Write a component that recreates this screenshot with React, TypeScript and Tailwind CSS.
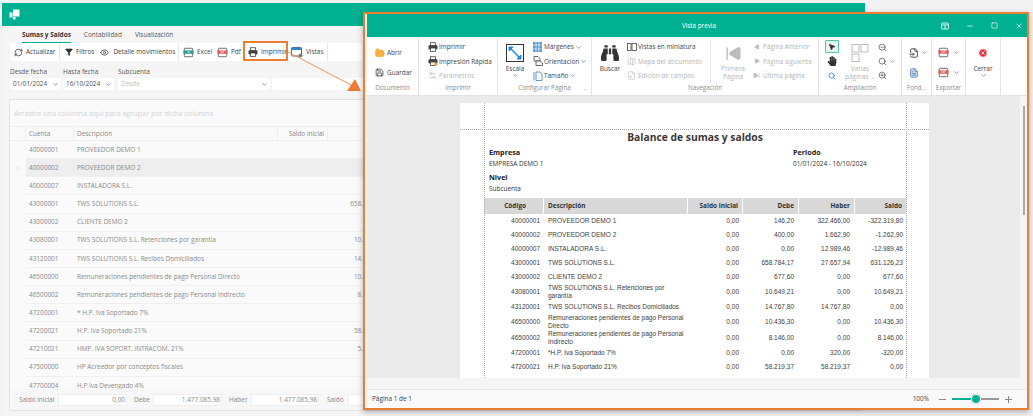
import React from "react";
import { ChevronDown, Eye, Filter, RefreshCw, FolderOpen, Save, MousePointer2, ZoomIn, ZoomOut, Search, SkipBack, Play, X, Minus, Square, XCircle, FileText, FileInput, Map, Settings2 } from "lucide-react";
import { FaBinoculars, FaHandPaper } from "react-icons/fa";

const Chev = ({ c = "#555" }: { c?: string }) => <ChevronDown size={7} color={c} strokeWidth={2} className="shrink-0" />;

const PrinterIcon = ({ size = 10, accent }: { size?: number; accent?: boolean }) => (
  <svg width={size} height={size} viewBox="0 0 10 10" className="shrink-0">
    <rect x="2.5" y="0.7" width="5" height="3" fill="#fff" stroke="#444" strokeWidth="0.8" />
    <rect x="0.5" y="3.2" width="9" height="4.2" rx="0.8" fill="#444" />
    <rect x="2.5" y="6" width="5" height="3.4" fill="#fff" stroke="#444" strokeWidth="0.8" />
    {accent && <circle cx="8" cy="8" r="1.6" fill="#f59a23" />}
  </svg>
);

const Sheet = ({ color, label }: { color: string; label: string }) => (
  <svg width="11" height="11" viewBox="0 0 13 12" className="shrink-0">
    <rect x="1.5" y="1" width="10" height="10" rx="1" fill="#fff" stroke="#555" strokeWidth="1" />
    <rect x="0.5" y="3.5" width="12" height="4" fill={color} />
    <text x="6.5" y="6.8" fontSize="3" fill="#fff" textAnchor="middle">{label}</text>
  </svg>
);

const ViewsIcon = () => (
  <svg width="12" height="11" viewBox="0 0 12 11" className="shrink-0">
    <rect x="0.5" y="0.5" width="10" height="8.5" rx="1" fill="#fff" stroke="#667" />
    <rect x="0.5" y="0.5" width="10" height="2.5" fill="#2f80d0" />
    <circle cx="9.5" cy="8.5" r="2" fill="#777" />
  </svg>
);

const ToolBtn = ({ icon, label, w, sep = true }: { icon: React.ReactNode; label: string; w: string; sep?: boolean }) => (
  <div className={`flex h-full items-center gap-[3px] pl-[2px] ${w} ${sep ? "border-r border-[#e6e6e6]" : ""}`}>
    {icon}
    <span className="whitespace-nowrap">{label}</span>
  </div>
);

const rows: [string, string, string][] = [
  ["40000001", "PROVEEDOR DEMO 1", "146,20"],
  ["40000002", "PROVEEDOR DEMO 2", "400,00"],
  ["40000007", "INSTALADORA S.L.", "0,00"],
  ["43000001", "TWS SOLUTIONS S.L.", "658.784,17"],
  ["43000002", "CLIENTE DEMO 2", "677,60"],
  ["43080001", "TWS SOLUTIONS S.L. Retenciones por garantía", "10.649,21"],
  ["43120001", "TWS SOLUTIONS S.L. Recibos Domiciliados", "14.767,80"],
  ["46500000", "Remuneraciones pendientes de pago Personal Directo", "10.436,30"],
  ["46500002", "Remuneraciones pendientes de pago Personal Indirecto", "8.146,00"],
  ["47200001", "* H.P. Iva Soportado 7%", "0,00"],
  ["47200021", "H.P. Iva Soportado 21%", "58.219,37"],
  ["47210021", "HMP. IVA SOPORT. INTRACOM. 21%", "5.400,00"],
  ["47500000", "HP Acreedor por conceptos fiscales", "0,00"],
  ["47700004", "H.P Iva Devengado 4%", "0,00"],
];

const report: [string, string, string, string, string, string, number][] = [
  ["40000001", "PROVEEDOR DEMO 1", "0,00", "146,20", "322.466,00", "-322.319,80", 14],
  ["40000002", "PROVEEDOR DEMO 2", "0,00", "400,00", "1.662,90", "-1.262,90", 14],
  ["40000007", "INSTALADORA S.L.", "0,00", "0,00", "12.989,46", "-12.989,46", 14],
  ["43000001", "TWS SOLUTIONS S.L.", "0,00", "658.784,17", "27.657,94", "631.126,23", 14],
  ["43000002", "CLIENTE DEMO 2", "0,00", "677,60", "0,00", "677,60", 14],
  ["43080001", "TWS SOLUTIONS S.L. Retenciones por garantía", "0,00", "10.649,21", "0,00", "10.649,21", 16],
  ["43120001", "TWS SOLUTIONS S.L. Recibos Domiciliados", "0,00", "14.767,80", "14.767,80", "0,00", 14],
  ["46500000", "Remuneraciones pendientes de pago Personal Directo", "0,00", "10.436,30", "0,00", "10.436,30", 16],
  ["46500002", "Remuneraciones pendientes de pago Personal Indirecto", "0,00", "8.146,00", "0,00", "8.146,00", 16],
  ["47200001", "*H.P. Iva Soportado 7%", "0,00", "0,00", "320,00", "-320,00", 14],
  ["47200021", "H.P. Iva Soportado 21%", "0,00", "58.219,37", "58.219,37", "0,00", 14],
];

const RibbonRow = ({ icon, label, off, chev }: { icon: React.ReactNode; label: string; off?: boolean; chev?: boolean }) => (
  <div className={`flex h-[15px] items-center gap-[1px] whitespace-nowrap ${off ? "text-[#b5b5b5]" : "text-[#444]"}`}>
    <span className="flex w-[11px] shrink-0 justify-center">{icon}</span>
    <span>{label}</span>
    {chev && <Chev />}
  </div>
);

const Group = ({ w, label, children, extra }: { w: string; label: string; children: React.ReactNode; extra?: React.ReactNode }) => (
  <div className={`relative flex h-full shrink-0 flex-col border-r border-[#e4e4e4] ${w}`}>
    <div className="flex min-h-0 flex-1 pt-[3px]">{children}</div>
    <div className="h-[12px] text-center text-[6.3px] leading-[10px] text-[#8c8c8c]">{label}</div>
    {extra}
  </div>
);

const Big = ({ icon, lines, off, chev, w }: { icon: React.ReactNode; lines: string[]; off?: boolean; chev?: boolean; w: string }) => (
  <div className={`flex shrink-0 flex-col items-center ${w} ${off ? "text-[#b5b5b5]" : "text-[#444]"}`}>
    <div className="flex h-[24px] items-center pt-[2px]">{icon}</div>
    {lines.map((l) => (
      <div key={l} className="mt-[-1px] h-[9px] pt-[1px] leading-[9px]">{l}</div>
    ))}
    {chev && <Chev />}
  </div>
);

export default function App() {
  return (
    <div className="relative h-[416px] w-[1033px] overflow-hidden bg-[#f3f3f3] pt-[3px] pl-[2px] font-['Open_Sans',sans-serif] text-[6.45px] text-[#444]">
      {/* Back window */}
      <div className="flex h-[413px] w-[863px] flex-col bg-[#f5f5f5]">
        <div className="flex h-[23px] shrink-0 items-center bg-[#00b191] pl-[7px]">
          <svg width="11" height="11" viewBox="0 0 11 11">
            <rect x="4" y="0.5" width="6.5" height="7" fill="#fff" />
            <rect x="0.5" y="3.5" width="3" height="5" fill="#fff" />
            <rect x="4" y="8" width="2.5" height="2.5" fill="#fff" />
          </svg>
        </div>
        <div className="flex h-[17px] shrink-0 items-center gap-[13px] pl-[20px] text-[#555]">
          <span className="relative font-bold text-[#333]">
            Sumas y Saldos
            <span className="absolute right-0 bottom-[-4px] left-0 h-[1px] bg-[#00b191]" />
          </span>
          <span className="font-medium">Contabilidad</span>
          <span className="font-medium">Visualización</span>
        </div>
        <div className="ml-[8px] flex h-[18px] w-[352px] shrink-0 items-center rounded-[3px] bg-white text-[#444]">
          <ToolBtn w="w-[50px] pl-[4px]" label="Actualizar" icon={<RefreshCw size={9} color="#333" />} />
          <div className="flex h-full w-[119px] items-center border-r border-[#e6e6e6] pl-[5px]">
            <Filter size={8} color="#333" fill="#333" />
            <span className="ml-[3px]">Filtros</span>
            <Eye size={9} color="#333" className="ml-[6px]" />
            <span className="ml-[4px] whitespace-nowrap">Detalle movimientos</span>
          </div>
          <ToolBtn w="w-[33px] pl-[4px]" sep={false} label="Excel" icon={<Sheet color="#2a9d8f" label="xls" />} />
          <ToolBtn w="w-[31px] pl-[5px]" sep={false} label="Pdf" icon={<Sheet color="#e05a5a" label="pdf" />} />
          <ToolBtn w="w-[45px] pl-[5px]" label="Imprimir" icon={<PrinterIcon />} />
          <ToolBtn w="w-[40px] pl-[3px]" label="Vistas" icon={<ViewsIcon />} />
        </div>
        <div className="flex shrink-0 gap-[2px] pt-[5px] pl-[8px] text-[#555]">
          <div className="w-[51px]">
            <div className="h-[11px] leading-[11px]">Desde fecha</div>
            <div className="mt-[1px] flex h-[12px] items-center justify-between rounded-[2px] bg-white pr-[2px] pl-[3px]">01/01/2024<Chev /></div>
          </div>
          <div className="w-[51px]">
            <div className="h-[11px] leading-[11px]">Hasta fecha</div>
            <div className="mt-[1px] flex h-[12px] items-center justify-between rounded-[2px] bg-white pr-[2px] pl-[3px]">16/10/2024<Chev /></div>
          </div>
          <div className="ml-[2px] w-[152px]">
            <div className="h-[11px] leading-[11px]">Subcuenta</div>
            <div className="mt-[1px] flex h-[12px] items-center justify-between rounded-[2px] bg-white pr-[2px] pl-[3px] text-[#c0c0c0]">Desde<Chev /></div>
          </div>
          <div className="w-[120px] pt-[12px]">
            <div className="h-[12px] rounded-[2px] bg-white" />
          </div>
        </div>
        <div className="mt-[9px] ml-[7px] flex h-[312px] w-[854px] flex-col overflow-hidden rounded-[2px] border border-[#e2e2e2] bg-[#fafafa]">
          <div className="flex h-[26px] shrink-0 items-center pl-[4px] text-[7.2px] text-[#d4d4d4]">Arrastre una columna aquí para agrupar por dicha columna</div>
          <div className="flex h-[15px] shrink-0 items-center border-y border-[#efefef] text-[#888]">
            <div className="h-full w-[16px] border-r border-[#efefef]" />
            <div className="flex h-full w-[48px] items-center border-r border-[#efefef] pl-[3px]">Cuenta</div>
            <div className="flex h-full w-[204px] items-center border-r border-[#efefef] pl-[3px]">Descripción</div>
            <div className="flex h-full w-[50px] items-center justify-end border-r border-[#efefef] pr-[3px]">Saldo inicial</div>
            <div className="flex h-full w-[55px] items-center justify-end border-r border-[#efefef] pr-[3px]">Debe</div>
          </div>
          <div className="min-h-0 flex-1 overflow-hidden">
            {rows.map(([c, d, s], i) => (
              <div key={c} className={`flex h-[18.15px] items-center text-[#8a8a8a] ${i === 1 ? "bg-[#eeeeee]" : ""}`}>
                <div className="flex h-full w-[16px] shrink-0 items-center justify-center bg-[#fafafa] text-[#bbb]">
                  {i === 1 && <Play size={5} strokeWidth={1} />}
                </div>
                <div className="flex h-full flex-1 items-center border-b border-[#f0f0f0]">
                  <div className="w-[48px] pl-[3px]">{c}</div>
                  <div className="w-[204px] pl-[3px] whitespace-nowrap">{d}</div>
                  <div className="w-[50px]" />
                  <div className="w-[55px] text-right">{s}</div>
                </div>
              </div>
            ))}
          </div>
          <div className="flex h-[21px] shrink-0 items-center bg-[#f7f7f7] pl-[9px] text-[#888]">
            <span className="w-[39px]">Saldo inicial</span>
            <span className="flex h-[12px] w-[69px] items-center justify-end border border-[#eeeeee] bg-white pr-[1px]">0,00</span>
            <span className="ml-[7px] w-[19px]">Debe</span>
            <span className="flex h-[12px] w-[69px] items-center justify-end border border-[#eeeeee] bg-white pr-[1px]">1.477.085,98</span>
            <span className="ml-[7px] w-[22px]">Haber</span>
            <span className="flex h-[12px] w-[68px] items-center justify-end border border-[#eeeeee] bg-white pr-[1px]">1.477.085,98</span>
            <span className="ml-[8px] w-[21px]">Saldo</span>
            <span className="h-[12px] w-[60px] border border-[#eeeeee] bg-white" />
          </div>
        </div>
      </div>

      {/* Imprimir highlight */}
      <div className="absolute top-[41px] left-[243px] h-[20px] w-[45px] border-2 border-[#ed7d31]" />
      {/* Arrow */}
      <svg className="absolute top-[50px] left-[285px]" width="80" height="45" viewBox="0 0 80 45">
        <line x1="3" y1="2" x2="68" y2="36" stroke="#ed7d31" strokeWidth="0.8" />
        <polygon points="62,41 76,41 70,29" fill="#ed7d31" />
      </svg>

      {/* Preview window */}
      <div className="absolute top-[12px] left-[363px] flex h-[398px] w-[666px] flex-col border-[2px] border-[#ed7d31] bg-[#f5f5f5] shadow-[0_2px_6px_rgba(0,0,0,0.3)]">
        <div className="ml-[2px] flex h-[23px] shrink-0 items-center bg-[#00b191] text-white">
          <div className="flex-1 pl-[315px] text-[6.3px]">Vista previa</div>
          <div className="flex items-center gap-[17px] pr-[4px] text-[#d5f3ec]">
            <svg width="8" height="8" viewBox="0 0 8 8" fill="none" stroke="currentColor"><rect x="0.5" y="1" width="7" height="6" rx="1" /><path d="M0.5 3H7.5M4 3V7" /></svg>
            <Minus size={8} strokeWidth={2.5} />
            <Square size={7} strokeWidth={2.5} />
            <X size={8} strokeWidth={2.5} />
          </div>
        </div>
        <div className="ml-[2px] flex h-[59px] shrink-0 border-b border-[#e2e2e2] bg-white">
          <Group w="w-[52px]" label="Documento">
            <div className="flex flex-col pl-[8px]">
              <div className="mt-[5px] flex h-[15px] items-center gap-[2px]"><FolderOpen size={10} color="#f59a23" fill="#f8b54a" />Abrir</div>
              <div className="mt-[5px] flex h-[15px] items-center gap-[3px]"><Save size={9} color="#333" />Guardar</div>
            </div>
          </Group>
          <Group w="w-[79px]" label="Imprimir">
            <div className="flex flex-col pl-[8px]">
              <RibbonRow label="Imprimir" icon={<PrinterIcon />} />
              <RibbonRow label="Impresión Rápida" icon={<PrinterIcon accent />} />
              <RibbonRow off label="Parámetros" icon={<Settings2 size={9} color="#bbb" />} />
            </div>
          </Group>
          <Group w="w-[94px]" label="Configurar Página" extra={<span className="absolute right-[4px] bottom-[2px] text-[5px] text-[#999]">⌐</span>}>
            <Big w="w-[30px] ml-[2px]" chev lines={["Escala"]} icon={
              <svg width="18" height="18" viewBox="0 0 18 18" fill="none"><rect x="0.5" y="0.5" width="17" height="17" stroke="#333" /><path d="M4 4L14 14" stroke="#1e88e5" strokeWidth="1.4" /><path d="M3 7V3H7L3 7ZM15 11V15H11L15 11Z" fill="#1e88e5" stroke="#1e88e5" /></svg>
            } />
            <div className="ml-[2px] flex flex-col">
              <RibbonRow chev label="Márgenes" icon={<svg width="9" height="10" viewBox="0 0 9 10"><rect width="9" height="10" fill="#5a9bd5" /><path d="M3 0V10M6 0V10M0 3H9M0 7H9" stroke="#fff" strokeWidth="0.6" /></svg>} />
              <RibbonRow chev label="Orientación" icon={<svg width="10" height="10" viewBox="0 0 10 10" fill="#fff" stroke="#444" strokeWidth="0.8"><path d="M1 .5H5L7 2.5V5H1Z" /><path d="M3 5H7L9.5 7V9.5H3Z" /></svg>} />
              <RibbonRow chev label="Tamaño" icon={<svg width="10" height="10" viewBox="0 0 10 10" fill="#fff" stroke="#2f80d0" strokeWidth="0.8"><path d="M3 1H7L9 3V9.5H3Z" /><path d="M1 1V9.5" /></svg>} />
            </div>
          </Group>
          <Group w="w-[227px]" label="Navegación">
            <Big w="w-[30px] ml-[3px]" lines={["Buscar"]} icon={<FaBinoculars size={18} color="#333" />} />
            <div className="ml-[1px] flex w-[84px] flex-col">
              <RibbonRow label="Vistas en miniatura" icon={<svg width="10" height="8" viewBox="0 0 10 8" fill="none" stroke="#444" strokeWidth="0.8"><rect x="0.5" y="0.5" width="3.5" height="7" /><rect x="5" y="0.5" width="4.5" height="7" /></svg>} />
              <RibbonRow off label="Mapa del documento" icon={<Map size={9} color="#c5c5c5" />} />
              <RibbonRow off label="Edición de campos" icon={<FileInput size={9} color="#c5c5c5" />} />
            </div>
            <div className="my-[1px] h-[42px] w-px bg-[#e6e6e6]" />
            <Big off w="w-[36px] ml-[4px]" lines={["Primera", "Página"]} icon={<SkipBack size={17} color="#bdbdbd" fill="#bdbdbd" />} />
            <div className="flex flex-col">
              <RibbonRow off label="Página Anterior" icon={<Play size={6} color="#bdbdbd" fill="#bdbdbd" className="rotate-180" />} />
              <RibbonRow off label="Página siguiente" icon={<Play size={6} color="#bdbdbd" fill="#bdbdbd" />} />
              <RibbonRow off label="Última página" icon={<SkipBack size={7} color="#bdbdbd" fill="#bdbdbd" className="rotate-180" />} />
            </div>
          </Group>
          <Group w="w-[83px]" label="Ampliación">
            <div className="ml-[5px] flex w-[15px] flex-col items-center">
              <div className="flex h-[14px] w-[14px] items-center justify-center rounded-[1px] border border-[#4cc4b0] bg-[#e8f4f2]"><MousePointer2 size={8} color="#333" fill="#333" /></div>
              <div className="flex h-[16px] items-center"><FaHandPaper size={10} color="#333" /></div>
              <div className="flex h-[15px] items-center"><Search size={8} color="#2f80d0" strokeWidth={2.4} /></div>
            </div>
            <Big off chev={false} w="w-[36px] ml-[3px]" lines={["Varias", "páginas ⌄"]} icon={
              <svg width="18" height="18" viewBox="0 0 18 18" fill="none" stroke="#bbb"><rect x="1" y="0.5" width="7" height="7.5" /><rect x="10" y="0.5" width="7" height="7.5" /><rect x="1" y="10" width="7" height="7.5" /></svg>
            } />
            <div className="flex flex-col items-start">
              <div className="flex h-[15px] items-center"><ZoomOut size={9} color="#555" /></div>
              <div className="flex h-[15px] items-center gap-[2px]"><Search size={9} color="#555" /><Chev /></div>
              <div className="flex h-[15px] items-center"><ZoomIn size={9} color="#555" /></div>
            </div>
          </Group>
          <Group w="w-[30px]" label="Fond...">
            <div className="flex flex-col pl-[7px]">
              <div className="mt-[5px] flex h-[15px] items-center gap-[2px]"><FileInput size={10} color="#333" /><Chev /></div>
              <div className="mt-[5px] flex h-[15px] items-center"><FileText size={10} color="#5a7fb0" fill="#cfe0f5" /></div>
            </div>
          </Group>
          <Group w="w-[34px]" label="Exportar">
            <div className="flex flex-col pl-[6px]">
              <div className="mt-[5px] flex h-[15px] items-center gap-[4px]"><Sheet color="#e05a5a" label="pdf" /><Chev /></div>
              <div className="mt-[5px] flex h-[15px] items-center gap-[4px]"><Sheet color="#e05a5a" label="pdf" /><Chev /></div>
            </div>
          </Group>
          <Group w="w-[35px]" label="">
            <Big w="w-full" chev lines={["Cerrar"]} icon={<XCircle size={10} color="#fff" fill="#e5303f" strokeWidth={2} />} />
          </Group>
        </div>
        <div className="relative ml-[2px] min-h-0 flex-1 overflow-hidden bg-[#f5f5f5]">
          <div className="mr-[7px] h-[282px] overflow-hidden bg-[#ebebeb] pt-[7px] pl-[93px]">
            <div className="relative h-[275px] w-[469px] bg-white text-[#333]">
              <div className="absolute top-[26px] right-0 left-0 border-t border-dotted border-[#a8a8a8]" />
              <div className="absolute top-0 bottom-0 left-[24px] border-l border-dotted border-[#a8a8a8]" />
              <div className="absolute top-0 bottom-0 left-[446px] border-l border-dotted border-[#a8a8a8]" />
              <div className="pt-[27px] pl-[24px]">
                <div className="w-[422px] text-center text-[10.3px] leading-[15px] font-bold text-[#3a3a3a]">Balance de sumas y saldos</div>
                <div className="mt-[2px] flex pl-[5px]">
                  <div className="w-[304px]">
                    <div className="h-[11px] text-[7.2px] leading-[11px] font-bold text-[#222]">Empresa</div>
                    <div className="h-[10px] pt-[1px] leading-[10px]">EMPRESA DEMO 1</div>
                    <div className="mt-[4px] h-[11px] text-[7.2px] leading-[11px] font-bold text-[#222]">Nivel</div>
                    <div className="h-[10px] pt-[1px] leading-[10px]">Subcuenta</div>
                  </div>
                  <div>
                    <div className="h-[11px] text-[7.2px] leading-[11px] font-bold text-[#222]">Periodo</div>
                    <div className="h-[10px] pt-[1px] leading-[10px]">01/01/2024 - 16/10/2024</div>
                  </div>
                </div>
                <div className="mt-[5px] flex h-[16px] w-[422px] items-center gap-[1px] font-bold text-[#333]">
                  <div className="flex h-full w-[59px] items-center justify-end bg-[#d8d8d8] pr-[17px]">Código</div>
                  <div className="flex h-full w-[143px] items-center bg-[#d8d8d8] pl-[4px]">Descripción</div>
                  <div className="flex h-full w-[54px] items-center justify-end bg-[#d8d8d8] pr-[4px]">Saldo inicial</div>
                  <div className="flex h-full w-[55px] items-center justify-end bg-[#d8d8d8] pr-[4px]">Debe</div>
                  <div className="flex h-full w-[55px] items-center justify-end bg-[#d8d8d8] pr-[4px]">Haber</div>
                  <div className="flex h-full w-[51px] items-center justify-end bg-[#d8d8d8] pr-[4px]">Saldo</div>
                </div>
                <div className="font-['Liberation_Sans',sans-serif] text-[6.5px] leading-[8px] text-[#3d3d3d]">
                  {report.map((r) => (
                    <div key={r[0]} className={`flex w-[422px] items-center gap-[1px] ${r[6] === 16 ? "h-[16px]" : "h-[14px]"}`}>
                      <div className="w-[56px] text-right">{r[0]}</div>
                      <div className="w-[147px] pr-[4px] pl-[7px]">{r[1]}</div>
                      <div className="w-[50px] text-right">{r[2]}</div>
                      <div className="w-[54px] text-right">{r[3]}</div>
                      <div className="w-[55px] text-right">{r[4]}</div>
                      <div className="w-[52px] text-right">{r[5]}</div>
                    </div>
                  ))}
                </div>
              </div>
            </div>
          </div>
          <div className="absolute top-[10px] right-[2px] h-[109px] w-[2px] bg-[#aaaaaa]" />
        </div>
        <div className="ml-[2px] flex h-[19px] shrink-0 items-center justify-between border-t border-[#e8e8e8] bg-[#f9f9f9] pr-[15px] pl-[5px] text-[#444]">
          <span>Página 1 de 1</span>
          <div className="flex items-center">
            <span>100%</span>
            <span className="ml-[10px] h-px w-[7px] bg-[#888]" />
            <div className="relative ml-[6px] flex h-[12px] w-[47px] items-center">
              <div className="h-[2px] w-[20px] bg-[#00b191]" />
              <div className="h-[2px] w-[27px] bg-[#999]" />
              <div className="absolute left-[19px] h-[10px] w-[10px] rounded-full border border-white bg-[#00b191] shadow-[0_0_1px_#888]" />
            </div>
            <span className="relative ml-[6px] block h-[7px] w-[7px]">
              <span className="absolute top-[3px] left-0 h-px w-[7px] bg-[#888]" />
              <span className="absolute top-0 left-[3px] h-[7px] w-px bg-[#888]" />
            </span>
          </div>
        </div>
      </div>
    </div>
  );
}
